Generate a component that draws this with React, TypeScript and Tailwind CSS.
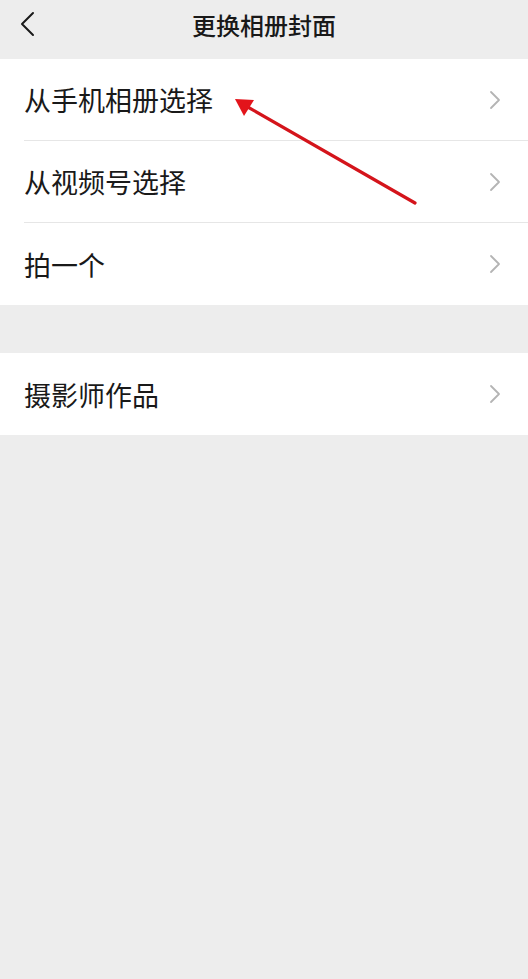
import React from "react";

const font = { fontFamily: '"Noto Sans CJK SC", "Noto Sans", sans-serif' };

function Chevron() {
  return (
    <svg width="12" height="20" viewBox="0 0 12 20" fill="none" className="shrink-0">
      <path d="M2 2l8 8-8 8" stroke="#b4b4b4" strokeWidth="1.8" strokeLinecap="round" strokeLinejoin="round" />
    </svg>
  );
}

function Row({ label, last }: { label: string; last?: boolean }) {
  return (
    <div className="flex h-[82px] items-stretch pl-6 bg-white">
      <div className={`flex flex-1 items-center justify-between pr-[27px] ${last ? "" : "border-b border-[#e6e6e6]"}`}>
        <span className="text-[27px] leading-none text-[#191919]">{label}</span>
        <Chevron />
      </div>
    </div>
  );
}

export default function App() {
  return (
    <main className="relative min-h-[979px] w-[528px] bg-[#ededed]" style={font}>
      {/* 顶栏 */}
      <header className="relative flex h-[59px] items-center justify-center">
        <button className="absolute left-[18px] top-[10px]">
          <svg width="20" height="28" viewBox="0 0 20 28" fill="none">
            <path d="M15 3L4 14l11 11" stroke="#1a1a1a" strokeWidth="2" strokeLinecap="round" strokeLinejoin="round" />
          </svg>
        </button>
        <h1 className="text-[24px] font-medium text-[#191919] -mt-[10px]">更换相册封面</h1>
      </header>

      <section className="flex flex-col">
        <Row label="从手机相册选择" />
        <Row label="从视频号选择" />
        <Row label="拍一个" last />
      </section>

      <section className="mt-[48px] flex flex-col">
        <Row label="摄影师作品" last />
      </section>

      {/* 红色标注箭头 */}
      <svg className="pointer-events-none absolute left-0 top-0" width="528" height="979" viewBox="0 0 528 979">
        <line x1="415" y1="203" x2="246" y2="106" stroke="#d4141b" strokeWidth="3.2" strokeLinecap="round" />
        <polygon points="235,99 254,100 244,116" fill="#e3141b" />
      </svg>
    </main>
  );
}
